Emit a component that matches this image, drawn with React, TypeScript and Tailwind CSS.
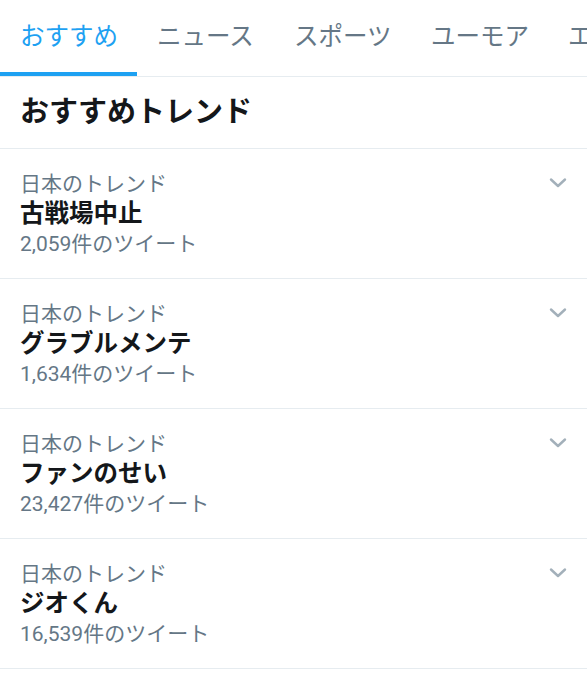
import React from "react";

const tabs = ["おすすめ", "ニュース", "スポーツ", "ユーモア", "エンタメ"];

const trends = [
  { name: "古戦場中止", count: "2,059" },
  { name: "グラブルメンテ", count: "1,634" },
  { name: "ファンのせい", count: "23,427" },
  { name: "ジオくん", count: "16,539" },
];

function Chevron() {
  return (
    <svg width="18" height="12" viewBox="0 0 18 12" fill="none">
      <path d="M2 2.5 L9 9 L16 2.5" stroke="#a3b0ba" strokeWidth="2.4" strokeLinecap="round" strokeLinejoin="round" />
    </svg>
  );
}

export default function App() {
  return (
    <div
      className="w-[587px] h-[680px] bg-white overflow-hidden"
      style={{ fontFamily: '"Roboto", "Noto Sans CJK JP", "Noto Sans", sans-serif' }}
    >
      <div className="flex h-[77px] border-b border-[#e6ecf0] whitespace-nowrap overflow-hidden">
        {tabs.map((t, i) => (
          <div
            key={t}
            className={
              i === 0
                ? "shrink-0 w-[137px] overflow-hidden pl-5 flex items-center h-[76px] border-b-4 border-[#1da1f2] text-[#1da1f2] text-[24.5px] pt-[2px]"
                : "shrink-0 w-[137px] overflow-hidden pl-5 flex items-center h-[72px] text-[#657786] text-[24.5px] pt-[2px]"
            }
          >
            {t}
          </div>
        ))}
      </div>
      <div className="h-[72px] flex items-center px-5 border-b border-[#e6ecf0]">
        <span className="text-[29px] font-bold text-[#14171a] leading-none">おすすめトレンド</span>
      </div>
      {trends.map((tr) => (
        <div key={tr.name} className="flex justify-between px-5 pt-[20px] pb-[19px] border-b border-[#e6ecf0]">
          <div className="flex flex-col">
            <div className="text-[21px] leading-[30px] text-[#657786]">日本のトレンド</div>
            <div className="text-[24.5px] leading-[30px] font-bold text-[#14171a]">{tr.name}</div>
            <div className="text-[21px] leading-[30px] text-[#657786]">{tr.count}件のツイート</div>
          </div>
          <div className="pt-[8px]">
            <Chevron />
          </div>
        </div>
      ))}
    </div>
  );
}
